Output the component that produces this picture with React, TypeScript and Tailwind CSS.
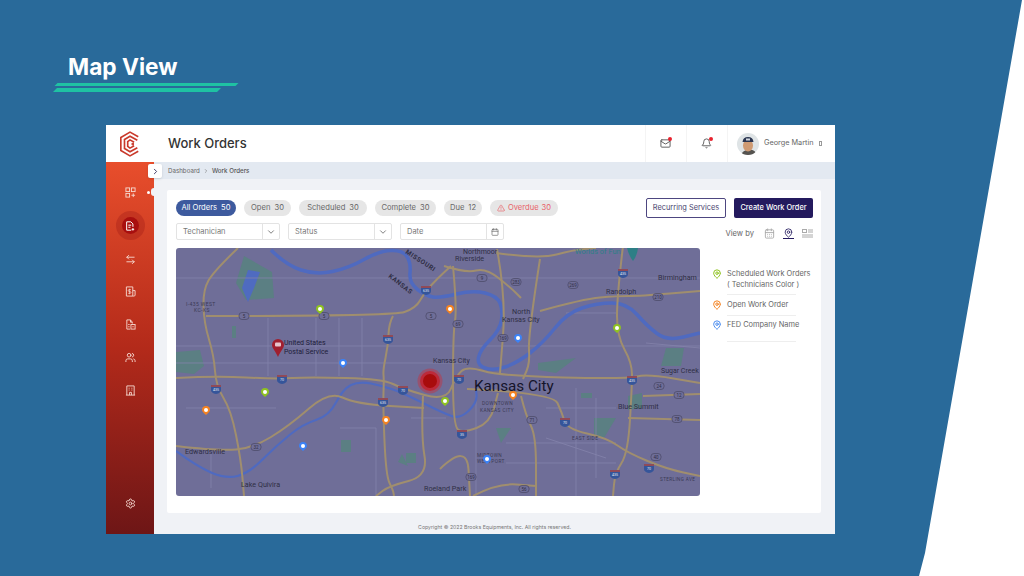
import { ArrowLeftRight, Bell, ChevronDown, ChevronRight, MapPin, Settings, Users, Mail, Calendar, CalendarDays, AlertTriangle } from 'lucide-react';

const font = "font-['Inter','Liberation_Sans',sans-serif]";

const filters = [
  { label: 'All Orders', count: 50, cls: 'w-[60px] bg-[#3d5a9e] text-white' },
  { label: 'Open', count: 30, cls: 'w-[47px] bg-[#e6e6e6] text-[#666]' },
  { label: 'Scheduled', count: 30, cls: 'w-[68px] bg-[#e6e6e6] text-[#666]' },
  { label: 'Complete', count: 30, cls: 'w-[61px] bg-[#e6e6e6] text-[#666]' },
  { label: 'Due', count: 12, cls: 'w-[38px] bg-[#e6e6e6] text-[#666]' },
];

// positions are map coordinates, the map is 524 x 248
const pins = [
  { x: 144, y: 61, c: '#8fc31f' },
  { x: 274, y: 61, c: '#f58220' },
  { x: 167, y: 115, c: '#3b82f6' },
  { x: 89, y: 144, c: '#8fc31f' },
  { x: 30, y: 162, c: '#f58220' },
  { x: 127, y: 198, c: '#3b82f6' },
  { x: 210, y: 172, c: '#f58220' },
  { x: 269, y: 153, c: '#8fc31f' },
  { x: 337, y: 147, c: '#f58220' },
  { x: 342, y: 90, c: '#3b82f6' },
  { x: 441, y: 80, c: '#8fc31f' },
  { x: 311, y: 211, c: '#3b82f6' },
];

const roads: number[][][] = [
  [[62, 0], [38, 23], [27, 42], [28, 75], [38, 108], [40, 138], [55, 162], [65, 212], [68, 248]],
  [[30, 68], [217, 68], [240, 60], [248, 45], [262, 30], [275, 18]],
  [[0, 130], [40, 128], [100, 131], [133, 129], [207, 131], [227, 141], [270, 153], [280, 128], [291, 118], [324, 128], [451, 131], [471, 126], [524, 135]],
  [[217, 68], [213, 75], [212, 98], [207, 122], [208, 131], [207, 158], [210, 228], [217, 242], [218, 248]],
  [[0, 198], [43, 203], [77, 200], [113, 178], [153, 143], [180, 156], [248, 160]],
  [[247, 148], [245, 188], [252, 228], [213, 238], [200, 248]],
  [[447, -2], [441, 48], [441, 88], [456, 115], [456, 138], [452, 205], [439, 225], [437, 248]],
  [[291, 141], [377, 145], [386, 165], [391, 181], [431, 190], [452, 205], [491, 221], [524, 228]],
  [[277, 18], [281, 61], [277, 85], [277, 178], [287, 185], [314, 175], [322, 145]],
  [[321, 1], [330, 50], [324, 125]],
  [[364, 11], [352, 88], [354, 115], [347, 131]],
  [[364, 63], [407, 51], [441, 48], [464, 48], [524, 43]],
  [[320, 5], [364, 11], [397, 2], [420, 0]],
  [[467, 148], [524, 146]],
  [[452, 170], [524, 172]],
  [[345, 148], [350, 168], [360, 188], [360, 248]],
  [[264, 221], [291, 195], [294, 248]],
  [[297, 248], [321, 235], [360, 238]],
  [[268, 18], [290, 25], [310, 20], [335, 40], [345, 50]],
];

const thinRoads = [
  'M0 30 L524 30', 'M0 98 L524 98', 'M0 115 L290 115', 'M92 70 L92 128', 'M140 70 L140 128',
  'M163 70 L163 128', 'M186 70 L186 128', 'M300 140 L300 248', 'M400 140 L400 248', 'M420 150 L420 230',
  'M10 160 L100 160', 'M35 205 L35 240', 'M164 180 L200 180 L200 248', 'M370 160 L440 160', 'M370 190 L430 210',
  'M330 195 L440 195', 'M330 215 L440 215', 'M390 65 L440 65', 'M470 95 L524 100', 'M235 170 L270 170',
];

const rivers: number[][][] = [
  [[95, 2], [110, 17], [140, 27], [173, 20], [203, 3], [227, 2], [235, 15], [233, 35], [250, 48], [264, 50], [297, 42], [321, 48], [327, 62], [324, 82], [304, 102], [301, 117], [317, 123], [341, 115], [367, 95], [391, 65], [421, 55], [451, 55], [471, 78], [491, 93], [524, 85]],
  [[0, 203], [20, 218], [50, 231], [73, 225], [100, 198], [127, 176], [153, 168], [167, 141], [183, 133], [207, 138], [227, 145], [267, 165], [284, 171], [301, 155], [300, 140]],
];

const parks = [
  'M68 8 L96 24 L98 50 L70 52 L60 35 Z',
  'M0 104 L24 102 L28 118 L18 126 L0 124 Z',
  'M165 192 L175 192 L175 204 L165 204 Z',
  'M226 206 L232 218 L222 214 Z',
  'M418 170 L440 170 L428 190 L418 188 Z',
  'M490 100 L508 100 L505 118 L485 118 Z',
  'M362 115 L400 110 L380 125 L362 122 Z',
  'M452 148 L466 145 L466 160 L452 162 Z',
  'M320 180 L335 180 L325 195 Z',
  'M230 205 L240 205 L240 215 L230 215 Z',
  'M56 78 L60 78 L60 90 L56 90 Z',
  'M405 145 L416 145 L416 150 L405 150 Z',
];

const shields = [
  { x: 68, y: 68, t: '5' }, { x: 148, y: 68, t: '5' }, { x: 255, y: 68, t: '5' },
  { x: 80, y: 199, t: '32' }, { x: 282, y: 76, t: '69' }, { x: 306, y: 30, t: '9' },
  { x: 340, y: 34, t: '283' }, { x: 397, y: 37, t: '269' }, { x: 327, y: 90, t: '169' },
  { x: 482, y: 49, t: '210' }, { x: 483, y: 138, t: '24' }, { x: 503, y: 147, t: '12' },
  { x: 501, y: 171, t: '78' }, { x: 356, y: 172, t: '71' }, { x: 480, y: 209, t: '40' },
  { x: 295, y: 229, t: '169' }, { x: 348, y: 241, t: '56' },
];

const interstates = [
  { x: 40, y: 141, t: '435' }, { x: 106, y: 131, t: '70' }, { x: 212, y: 91, t: '635' },
  { x: 250, y: 42, t: '635' }, { x: 207, y: 154, t: '635' }, { x: 227, y: 142, t: '70' },
  { x: 283, y: 131, t: '70' }, { x: 447, y: 25, t: '435' }, { x: 456, y: 132, t: '435' },
  { x: 389, y: 174, t: '70' }, { x: 286, y: 186, t: '35' }, { x: 439, y: 226, t: '435' }, { x: 473, y: 220, t: '70' },
];

const labels = [
  { x: 10, y: 58, t: 'I-435 WEST', s: 5, c: '#3b3a55' },
  { x: 18, y: 64, t: 'KC-KS', s: 5, c: '#3b3a55' },
  { x: 9, y: 206, t: 'Edwardsville', s: 7.2, c: '#2f2e45' },
  { x: 65, y: 239, t: 'Lake Quivira', s: 7.2, c: '#2f2e45' },
  { x: 257, y: 115, t: 'Kansas City', s: 7, c: '#2f2e45' },
  { x: 279, y: 13, t: 'Riverside', s: 7.2, c: '#2f2e45' },
  { x: 287, y: 6, t: 'Northmoor', s: 7, c: '#2f2e45' },
  { x: 336, y: 66, t: 'North', s: 7.2, c: '#2f2e45' },
  { x: 326, y: 74, t: 'Kansas City', s: 7.2, c: '#2f2e45' },
  { x: 430, y: 46, t: 'Randolph', s: 7.2, c: '#2f2e45' },
  { x: 482, y: 32, t: 'Birmingham', s: 7.2, c: '#2f2e45' },
  { x: 485, y: 125, t: 'Sugar Creek', s: 7, c: '#2f2e45' },
  { x: 442, y: 161, t: 'Blue Summit', s: 7.2, c: '#2f2e45' },
  { x: 306, y: 157, t: 'DOWNTOWN', s: 4.8, c: '#3b3a55' },
  { x: 304, y: 164, t: 'KANSAS CITY', s: 4.8, c: '#3b3a55' },
  { x: 396, y: 192, t: 'EAST SIDE', s: 4.8, c: '#3b3a55' },
  { x: 301, y: 209, t: 'MIDTOWN', s: 4.8, c: '#3b3a55' },
  { x: 301, y: 215, t: 'WESTPORT', s: 4.8, c: '#3b3a55' },
  { x: 484, y: 233, t: 'STERLING AVE', s: 4.6, c: '#3b3a55' },
  { x: 248, y: 243, t: 'Roeland Park', s: 7.2, c: '#2f2e45' },
  { x: 399, y: 6, t: 'Worlds of Fun', s: 7.4, c: '#2d7f86' },
];

// rounds the corners of a polyline, good enough for roads and rivers
function smooth(pts: number[][]) {
  let d = `M${pts[0][0]} ${pts[0][1]}`;
  for (let i = 1; i < pts.length - 1; i++) {
    const mx = (pts[i][0] + pts[i + 1][0]) / 2;
    const my = (pts[i][1] + pts[i + 1][1]) / 2;
    d += ` Q${pts[i][0]} ${pts[i][1]} ${mx} ${my}`;
  }
  const last = pts[pts.length - 1];
  return d + ` L${last[0]} ${last[1]}`;
}

function MapPanel() {
  return (
    <svg viewBox="0 0 524 248" className="block h-[248px] w-[524px] shrink-0 rounded-[3px] bg-[#6f6e98]">
      {parks.map((d, i) => (
        <path key={i} d={d} fill="#5b7f83" />
      ))}
      <path d="M72 22 L84 24 L78 40 L72 54 L66 40 Z" fill="#4f6bc0" />
      {thinRoads.map((d, i) => (
        <path key={i} d={d} fill="none" stroke="#8483ab" strokeWidth="0.8" />
      ))}
      {rivers.map((pts, i) => (
        <path key={i} d={smooth(pts)} fill="none" stroke="#4f6ac0" strokeWidth={i === 0 ? 3.5 : 2.2} strokeLinejoin="round" />
      ))}
      {roads.map((pts, i) => (
        <path key={i} d={smooth(pts)} fill="none" stroke="#a08e6e" strokeWidth="2" strokeLinejoin="round" />
      ))}
      {shields.map((s) => (
        <g key={s.x + '-' + s.y}>
          <rect x={s.x - 5} y={s.y - 3.5} width="10" height="7" rx="3" fill="#6f6e98" stroke="#43425c" strokeWidth="0.6" />
          <text x={s.x} y={s.y + 1.8} textAnchor="middle" fontSize="4.5" fill="#2f2e45" fontFamily="Roboto, sans-serif">{s.t}</text>
        </g>
      ))}
      {interstates.map((s) => (
        <g key={s.x + '-' + s.y}>
          <path d={`M${s.x - 5} ${s.y - 4} H${s.x + 5} V${s.y + 1} Q${s.x + 5} ${s.y + 4} ${s.x} ${s.y + 5} Q${s.x - 5} ${s.y + 4} ${s.x - 5} ${s.y + 1} Z`} fill="#35559a" />
          <rect x={s.x - 5} y={s.y - 4} width="10" height="2" fill="#8f4a58" />
          <text x={s.x} y={s.y + 2.2} textAnchor="middle" fontSize="3.6" fill="#e4e6f2" fontFamily="Roboto, sans-serif">{s.t}</text>
        </g>
      ))}
      {labels.map((l) => (
        <text key={l.t + l.x} x={l.x} y={l.y} fontSize={l.s} fill={l.c} fontFamily="Roboto, sans-serif" letterSpacing={l.s < 5.5 ? 0.4 : 0}>{l.t}</text>
      ))}
      <text x="298" y="143" fontSize="15.2" fill="#15142a" fontFamily="Roboto, sans-serif">Kansas City</text>
      <text x="229" y="5" fontSize="6.5" fill="#2f2e45" fontWeight="700" letterSpacing="0.5" fontFamily="Roboto, sans-serif" transform="rotate(33 229 5)">MISSOURI</text>
      <text x="212" y="29" fontSize="6.5" fill="#2f2e45" fontWeight="700" letterSpacing="0.5" fontFamily="Roboto, sans-serif" transform="rotate(38 212 29)">KANSAS</text>
      <path d="M451 0 Q453 8 457 13 Q461 8 462 0 Z" fill="#2d7f86" />
      {/* post office marker */}
      <path d="M96 97 a6 6 0 1 1 12 0 c0 3 -4 7 -6 12 c-2 -5 -6 -9 -6 -12 Z" fill="#a01f2f" />
      <rect x="99" y="94.5" width="6" height="4" rx="1" fill="#e6c4cc" />
      <text x="108" y="97" fontSize="7" fill="#20203a" fontFamily="Roboto, sans-serif">United States</text>
      <text x="108" y="106" fontSize="7" fill="#20203a" fontFamily="Roboto, sans-serif">Postal Service</text>
      {/* selected job */}
      <circle cx="254" cy="133" r="12.5" fill="#c8303f" fillOpacity="0.45" />
      <circle cx="254" cy="133" r="10" fill="#c81e28" fillOpacity="0.75" />
      <circle cx="254" cy="133" r="7" fill="#a80c0c" />
      {pins.map((p) => (
        <g key={p.x + '-' + p.y}>
          <path d={`M${p.x - 4} ${p.y} a4 4 0 1 1 8 0 c0 1.8 -2.2 3.2 -4 5 c-1.8 -1.8 -4 -3.2 -4 -5 Z`} fill={p.c} />
          <circle cx={p.x} cy={p.y} r="2" fill="#fff" />
        </g>
      ))}
    </svg>
  );
}

function LegendPin({ color }: { color: string }) {
  return <MapPin className="h-[10px] w-[10px] shrink-0" style={{ color }} strokeWidth={2.4} />;
}

function Sidebar() {
  const iconCls = 'h-[11px] w-[11px] text-[#f6d9d0]';
  return (
    <div className="relative flex w-[48px] shrink-0 flex-col">
      <div className="flex h-[37px] items-center justify-center bg-white">
        <svg viewBox="0 0 24 28" className="h-[26px] w-[22px]" fill="none" stroke="#c9392b" strokeWidth="1.8">
          <path d="M21 6 L12 1 L2 7 V21 L12 27 L21 22" />
          <path d="M20 10 L12 5.5 L6 9 V19 L12 22.5 L20 18" />
          <path d="M16.5 12 L12 9.5 L9.5 11.5 V16.5 L12 18.5 L16.5 16" />
          <circle cx="15" cy="14" r="0.6" fill="#c9392b" />
        </svg>
      </div>
      <div className="relative flex flex-1 flex-col items-center bg-gradient-to-b from-[#e84e2c] via-[#b32a1a] to-[#6e1616] pb-[25px] pt-[25px]">
        <svg viewBox="0 0 12 12" className="h-[11px] w-[11px]" fill="none" stroke="#f6d9d0" strokeWidth="1">
          <rect x="1" y="1" width="4" height="4" />
          <rect x="7" y="1" width="4" height="4" />
          <rect x="1" y="7" width="4" height="4" />
          <path d="M9 7 V11 M7 9 H11" />
        </svg>
        <span className="absolute left-[41px] top-[29px] h-[3px] w-[3px] rounded-full bg-white" />
        <span className="absolute left-[45px] top-[26px] h-[8px] w-[3px] rounded-l-full bg-[#f0f2f6]" />
        <div className="mt-[19px] flex h-[17px] w-[17px] items-center justify-center rounded-full bg-[#a80f0f] shadow-[0_0_0_6px_rgba(150,20,20,0.3)]">
          <svg viewBox="0 0 12 12" className="h-[10px] w-[10px]" fill="none" stroke="#fff" strokeWidth="1.2">
            <path d="M7.5 11 H2 V1 H7 L9.5 3.5 V7" />
            <path d="M4 5 H7.5 M4 7.5 H6.5 M9.5 8.5 V11.5 M8 10 H11" />
          </svg>
        </div>
        <ArrowLeftRight className={`mt-[20px] ${iconCls}`} />
        <svg viewBox="0 0 12 12" className={`mt-[21px] ${iconCls}`} fill="none" stroke="currentColor" strokeWidth="1">
          <path d="M1.5 1 H8.5 V11 H1.5 Z M8.5 5 H11 V10 Q11 11 9.5 11 H8.5" />
          <path d="M5 3 V9 M6.5 4 H4.2 Q3.5 4 3.5 5 Q3.5 6 5 6 Q6.5 6 6.5 7 Q6.5 8 5.6 8 H3.5" strokeWidth="0.8" />
        </svg>
        <svg viewBox="0 0 12 12" className={`mt-[22px] ${iconCls}`} fill="none" stroke="currentColor" strokeWidth="1">
          <path d="M8 5 V3.5 L6 1 H2 V11 H5.5 M6 1 V3.5 H8" />
          <rect x="6.5" y="6" width="4.5" height="5" />
          <path d="M3.5 6 H5 M3.5 8.5 H5 M8 8.5 H9.5" />
        </svg>
        <Users className={`mt-[22px] ${iconCls}`} />
        <svg viewBox="0 0 12 12" className={`mt-[22px] ${iconCls}`} fill="none" stroke="currentColor" strokeWidth="1">
          <path d="M2 11 V1 H10 V11 M1 11 H11" />
          <path d="M4 3.5 H5 M7 3.5 H8 M4 5.5 H5 M7 5.5 H8 M5 11 V8 H7 V11" />
        </svg>
        <Settings className={`mt-auto ${iconCls}`} />
      </div>
      <button className="absolute left-[42px] top-[39px] flex h-[14px] w-[14px] items-center justify-center rounded-[2px] bg-white shadow-sm">
        <ChevronRight className="h-[9px] w-[9px] text-[#3a3560]" strokeWidth={2.5} />
      </button>
    </div>
  );
}

function SelectBox({ label, children }: { label: string; children: React.ReactNode }) {
  return (
    <div className="flex h-[17px] w-[104px] items-center rounded-[2px] border border-[#e3e3e3] bg-white">
      <span className="flex-1 pl-[6px] text-[7.5px] text-[#777]">{label}</span>
      <span className="flex h-full w-[17px] items-center justify-center border-l border-[#e3e3e3]">{children}</span>
    </div>
  );
}

export default function App() {
  return (
    <div className={`relative flex h-[576px] w-[1024px] flex-col overflow-hidden bg-[#296a9a] ${font}`}>
      <svg viewBox="0 0 1024 576" className="pointer-events-none absolute inset-0 h-full w-full">
        <path d="M1022 0 H1024 V576 H919 L925 553 Z" fill="#fff" />
      </svg>

      <div className="relative ml-[68px] mt-[53px] text-[22.7px] font-bold leading-[28px] text-white">Map View</div>
      <div className="relative ml-[56px] mt-[2px] h-[3px] w-[181px] -skew-x-[45deg] bg-[#1fc2a3]" />
      <div className="relative ml-[55px] mt-[2px] h-[4px] w-[164px] -skew-x-[45deg] bg-[#1fc2a3]" />

      <div className="relative ml-[106px] mt-[33px] flex h-[409px] w-[729px]">
        <Sidebar />
        <div className="flex min-w-0 flex-1 flex-col bg-[#f0f2f6]">
          <div className="flex h-[37px] items-center bg-white pl-[14px]">
            <h1 className="flex-1 text-[13px] font-medium text-[#333]">Work Orders</h1>
            <div className="flex h-full w-[41px] items-center justify-center border-l border-[#f4f4f4] pr-[2px]">
              <span className="relative">
                <Mail className="h-[11px] w-[11px] text-[#555]" />
                <span className="absolute -right-[1px] -top-[1px] h-[4px] w-[4px] rounded-full bg-[#e8222e]" />
              </span>
            </div>
            <div className="flex h-full w-[41px] items-center justify-center border-l border-[#f4f4f4] pr-[2px]">
              <span className="relative">
                <Bell className="h-[11px] w-[11px] text-[#555]" />
                <span className="absolute -right-[1px] -top-[1px] h-[4px] w-[4px] rounded-full bg-[#e8222e]" />
              </span>
            </div>
            <div className="flex h-full w-[108px] items-center border-l border-[#f4f4f4] pl-[9px]">
              <svg viewBox="0 0 22 22" className="h-[22px] w-[22px] shrink-0 rounded-full">
                <rect width="22" height="22" fill="#dfe4e6" />
                <path d="M4 22 Q6 17 11 17 Q18 16 20 22 Z" fill="#55534f" />
                <ellipse cx="11" cy="12.5" rx="5" ry="6" fill="#cf9a72" />
                <path d="M5.5 9 Q6 4 11 4 Q16 4 16.5 9 Z" fill="#2b3550" />
                <rect x="9" y="5.5" width="4" height="2" fill="#cfd4dc" />
              </svg>
              <span className="ml-[5px] text-[7.3px] text-[#666]">George Martin</span>
              <span className="ml-[5px] h-[5px] w-[3px] border border-[#999]" />
            </div>
          </div>
          <div className="flex h-[17px] items-center bg-[#e3e9f1] pl-[14px] text-[6.2px] text-[#666]">
            <span>Dashboard</span>
            <ChevronRight className="mx-[3px] h-[6px] w-[6px]" />
            <span className="font-medium text-[#555]">Work Orders</span>
          </div>

          <div className="ml-[13px] mr-[14px] mt-[11px] flex h-[323px] flex-col rounded-[2px] bg-white pl-[9px] pr-[8px]">
            <div className="mt-[8px] flex items-start justify-between">
              <div className="mt-[2px] flex gap-[8px]">
                {filters.map((f) => (
                  <span key={f.label} className={`flex h-[16px] items-center justify-center gap-[4px] rounded-full text-[7.6px] ${f.cls}`}>
                    <span>{f.label}</span>
                    <span>{f.count}</span>
                  </span>
                ))}
                <span className="flex h-[16px] w-[68px] items-center justify-center gap-[3px] rounded-full bg-[#e6e6e6] text-[7.6px] text-[#e8636a]">
                  <AlertTriangle className="h-[8px] w-[8px]" />
                  <span>Overdue</span>
                  <span>30</span>
                </span>
              </div>
              <div className="flex gap-[8px]">
                <button className="h-[20px] w-[80px] rounded-[2px] border border-[#4d4680] bg-white text-[7.4px] text-[#4a4570]">Recurring Services</button>
                <button className="h-[20px] w-[79px] rounded-[2px] bg-[#241a5e] text-[7.4px] font-medium text-white">Create Work Order</button>
              </div>
            </div>

            <div className="mt-[5px] flex items-center">
              <div className="flex gap-[8px]">
                <SelectBox label="Techanician"><ChevronDown className="h-[10px] w-[10px] text-[#666]" /></SelectBox>
                <SelectBox label="Status"><ChevronDown className="h-[10px] w-[10px] text-[#666]" /></SelectBox>
                <SelectBox label="Date"><Calendar className="h-[8px] w-[8px] text-[#666]" /></SelectBox>
              </div>
              <span className="ml-auto mt-[5px] flex items-center gap-[8px] text-[7.6px] text-[#666]">
                <span className="mr-[2px]">View by</span>
                <CalendarDays className="h-[11px] w-[11px] text-[#aaa]" />
                <span className="border-b border-[#241a5e]">
                  <MapPin className="h-[10px] w-[11px] text-[#241a5e]" />
                </span>
                <svg viewBox="0 0 11 9" className="h-[9px] w-[11px]" fill="none" stroke="#aaa" strokeWidth="1">
                  <rect x="0.5" y="0.5" width="4" height="3" />
                  <path d="M6 1 H11 M6 3 H11 M0 6 H11 M0 8 H11" />
                </svg>
              </span>
            </div>

            <div className="mt-[8px] flex">
              <MapPanel />
              <div className="ml-[12px] mt-[21px] whitespace-nowrap text-[7.4px] leading-[10.5px] text-[#666]">
                <div className="flex gap-[5px]">
                  <LegendPin color="#8fc31f" />
                  <div>
                    <div>Scheduled Work Orders</div>
                    <div>( Technicians Color )</div>
                    <div className="mt-[4px] w-[69px] border-b border-[#eee]" />
                  </div>
                </div>
                <div className="mt-[5px] flex gap-[5px]">
                  <LegendPin color="#f58220" />
                  <div>
                    <div>Open Work Order</div>
                    <div className="mt-[4px] w-[69px] border-b border-[#eee]" />
                  </div>
                </div>
                <div className="mt-[4px] flex gap-[5px]">
                  <LegendPin color="#4b8df0" />
                  <div>
                    <div>FED Company Name</div>
                    <div className="mt-[11px] w-[69px] border-b border-[#eee]" />
                  </div>
                </div>
              </div>
            </div>
          </div>

          <div className="mt-[11px] text-center text-[5.2px] text-[#777]">Copyright © 2022 Brooks Equipments, Inc. All rights reserved.</div>
        </div>
      </div>
    </div>
  );
}
